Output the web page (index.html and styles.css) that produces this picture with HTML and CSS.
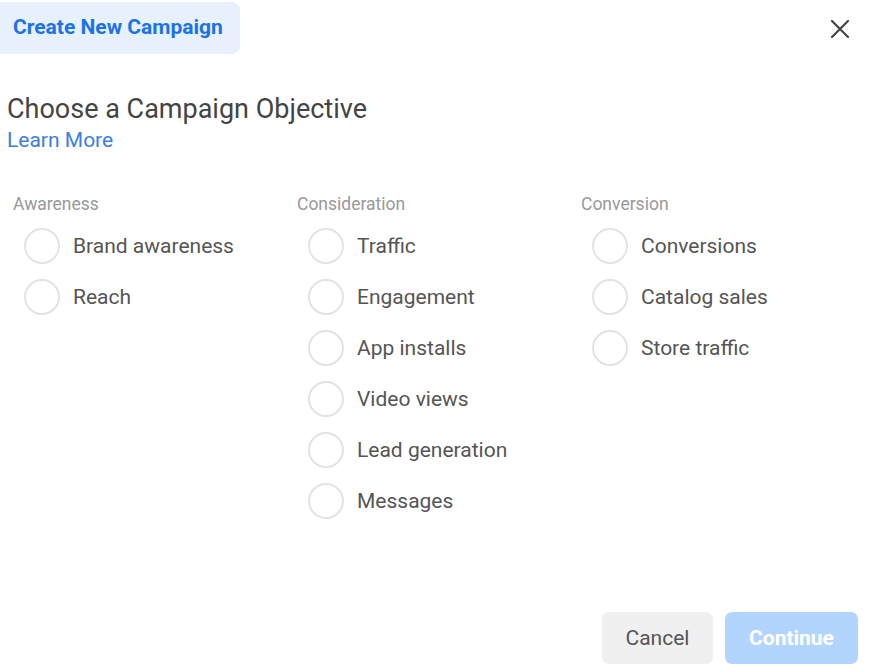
FILE: index.html
```html
<!DOCTYPE html>
<html>
<head>
<meta charset="utf-8">
<link rel="stylesheet" href="styles.css">
</head>
<body>
<div class="dialog">
  <header class="top">
    <div class="tab">Create New Campaign</div>
    <button class="close" aria-label="Close">
      <svg width="20" height="20" viewBox="0 0 20 20"><path d="M2 2 L18 18 M18 2 L2 18" stroke="#444" stroke-width="2.2" stroke-linecap="round"/></svg>
    </button>
  </header>
  <section class="intro">
    <h1 class="title">Choose a Campaign Objective</h1>
    <a class="learn">Learn More</a>
  </section>
  <section class="cols">
    <div class="col">
      <div class="col-label">Awareness</div>
      <label class="opt"><span class="radio"></span><span class="opt-text">Brand awareness</span></label>
      <label class="opt"><span class="radio"></span><span class="opt-text">Reach</span></label>
    </div>
    <div class="col">
      <div class="col-label">Consideration</div>
      <label class="opt"><span class="radio"></span><span class="opt-text">Traffic</span></label>
      <label class="opt"><span class="radio"></span><span class="opt-text">Engagement</span></label>
      <label class="opt"><span class="radio"></span><span class="opt-text">App installs</span></label>
      <label class="opt"><span class="radio"></span><span class="opt-text">Video views</span></label>
      <label class="opt"><span class="radio"></span><span class="opt-text">Lead generation</span></label>
      <label class="opt"><span class="radio"></span><span class="opt-text">Messages</span></label>
    </div>
    <div class="col">
      <div class="col-label">Conversion</div>
      <label class="opt"><span class="radio"></span><span class="opt-text">Conversions</span></label>
      <label class="opt"><span class="radio"></span><span class="opt-text">Catalog sales</span></label>
      <label class="opt"><span class="radio"></span><span class="opt-text">Store traffic</span></label>
    </div>
  </section>
  <footer class="foot">
    <button class="btn cancel">Cancel</button>
    <button class="btn continue">Continue</button>
  </footer>
</div>
</body>
</html>
```
FILE: styles.css
```css
html, body {
  margin: 0;
  padding: 0;
  background: #fff;
}
body {
  font-family: Roboto, "Liberation Sans", sans-serif;
}
.dialog {
  width: 876px;
  height: 666px;
  display: flex;
  flex-direction: column;
  box-sizing: border-box;
}
.top {
  display: flex;
  justify-content: space-between;
  align-items: flex-start;
  padding-top: 2px;
}
.tab {
  width: 240px;
  height: 52px;
  box-sizing: border-box;
  background: #e7f0fd;
  border-radius: 0 8px 8px 0;
  color: #1a73e8;
  font-weight: 700;
  font-size: 21px;
  line-height: 50px;
  padding-left: 13px;
}
.close {
  border: 0;
  background: none;
  padding: 0;
  margin: 16px 25px 0 0;
  width: 22px;
  height: 22px;
  display: flex;
  align-items: center;
  justify-content: center;
}
.intro {
  padding: 40px 0 0 7px;
}
.title {
  margin: 0;
  font-weight: 400;
  font-size: 27px;
  line-height: 30px;
  color: #444;
}
.learn {
  display: block;
  margin-top: 4px;
  color: #3a7ee0;
  font-size: 21px;
  line-height: 24px;
}
.cols {
  display: grid;
  grid-template-columns: 284px 284px 284px;
  padding: 42px 0 0 13px;
}
.col {
  display: flex;
  flex-direction: column;
}
.col-label {
  font-size: 17.5px;
  line-height: 20px;
  color: #999;
  margin-bottom: 6px;
}
.opt {
  display: flex;
  align-items: center;
  height: 51px;
  padding-left: 11px;
}
.radio {
  width: 36px;
  height: 36px;
  box-sizing: border-box;
  border: 2px solid #e3e3e3;
  border-radius: 50%;
  flex: none;
}
.opt-text {
  margin-left: 13px;
  font-size: 21px;
  color: #555;
}
.foot {
  margin-top: auto;
  display: flex;
  justify-content: flex-end;
  gap: 12px;
  padding: 0 18px 2px 0;
}
.btn {
  height: 52px;
  border: 0;
  border-radius: 7px;
  font-family: Roboto, "Liberation Sans", sans-serif;
  font-size: 21px;
}
.cancel {
  width: 111px;
  background: #f0f0f0;
  color: #555;
}
.continue {
  width: 133px;
  background: #b3d5fd;
  color: #fff;
  font-weight: 700;
}
```
